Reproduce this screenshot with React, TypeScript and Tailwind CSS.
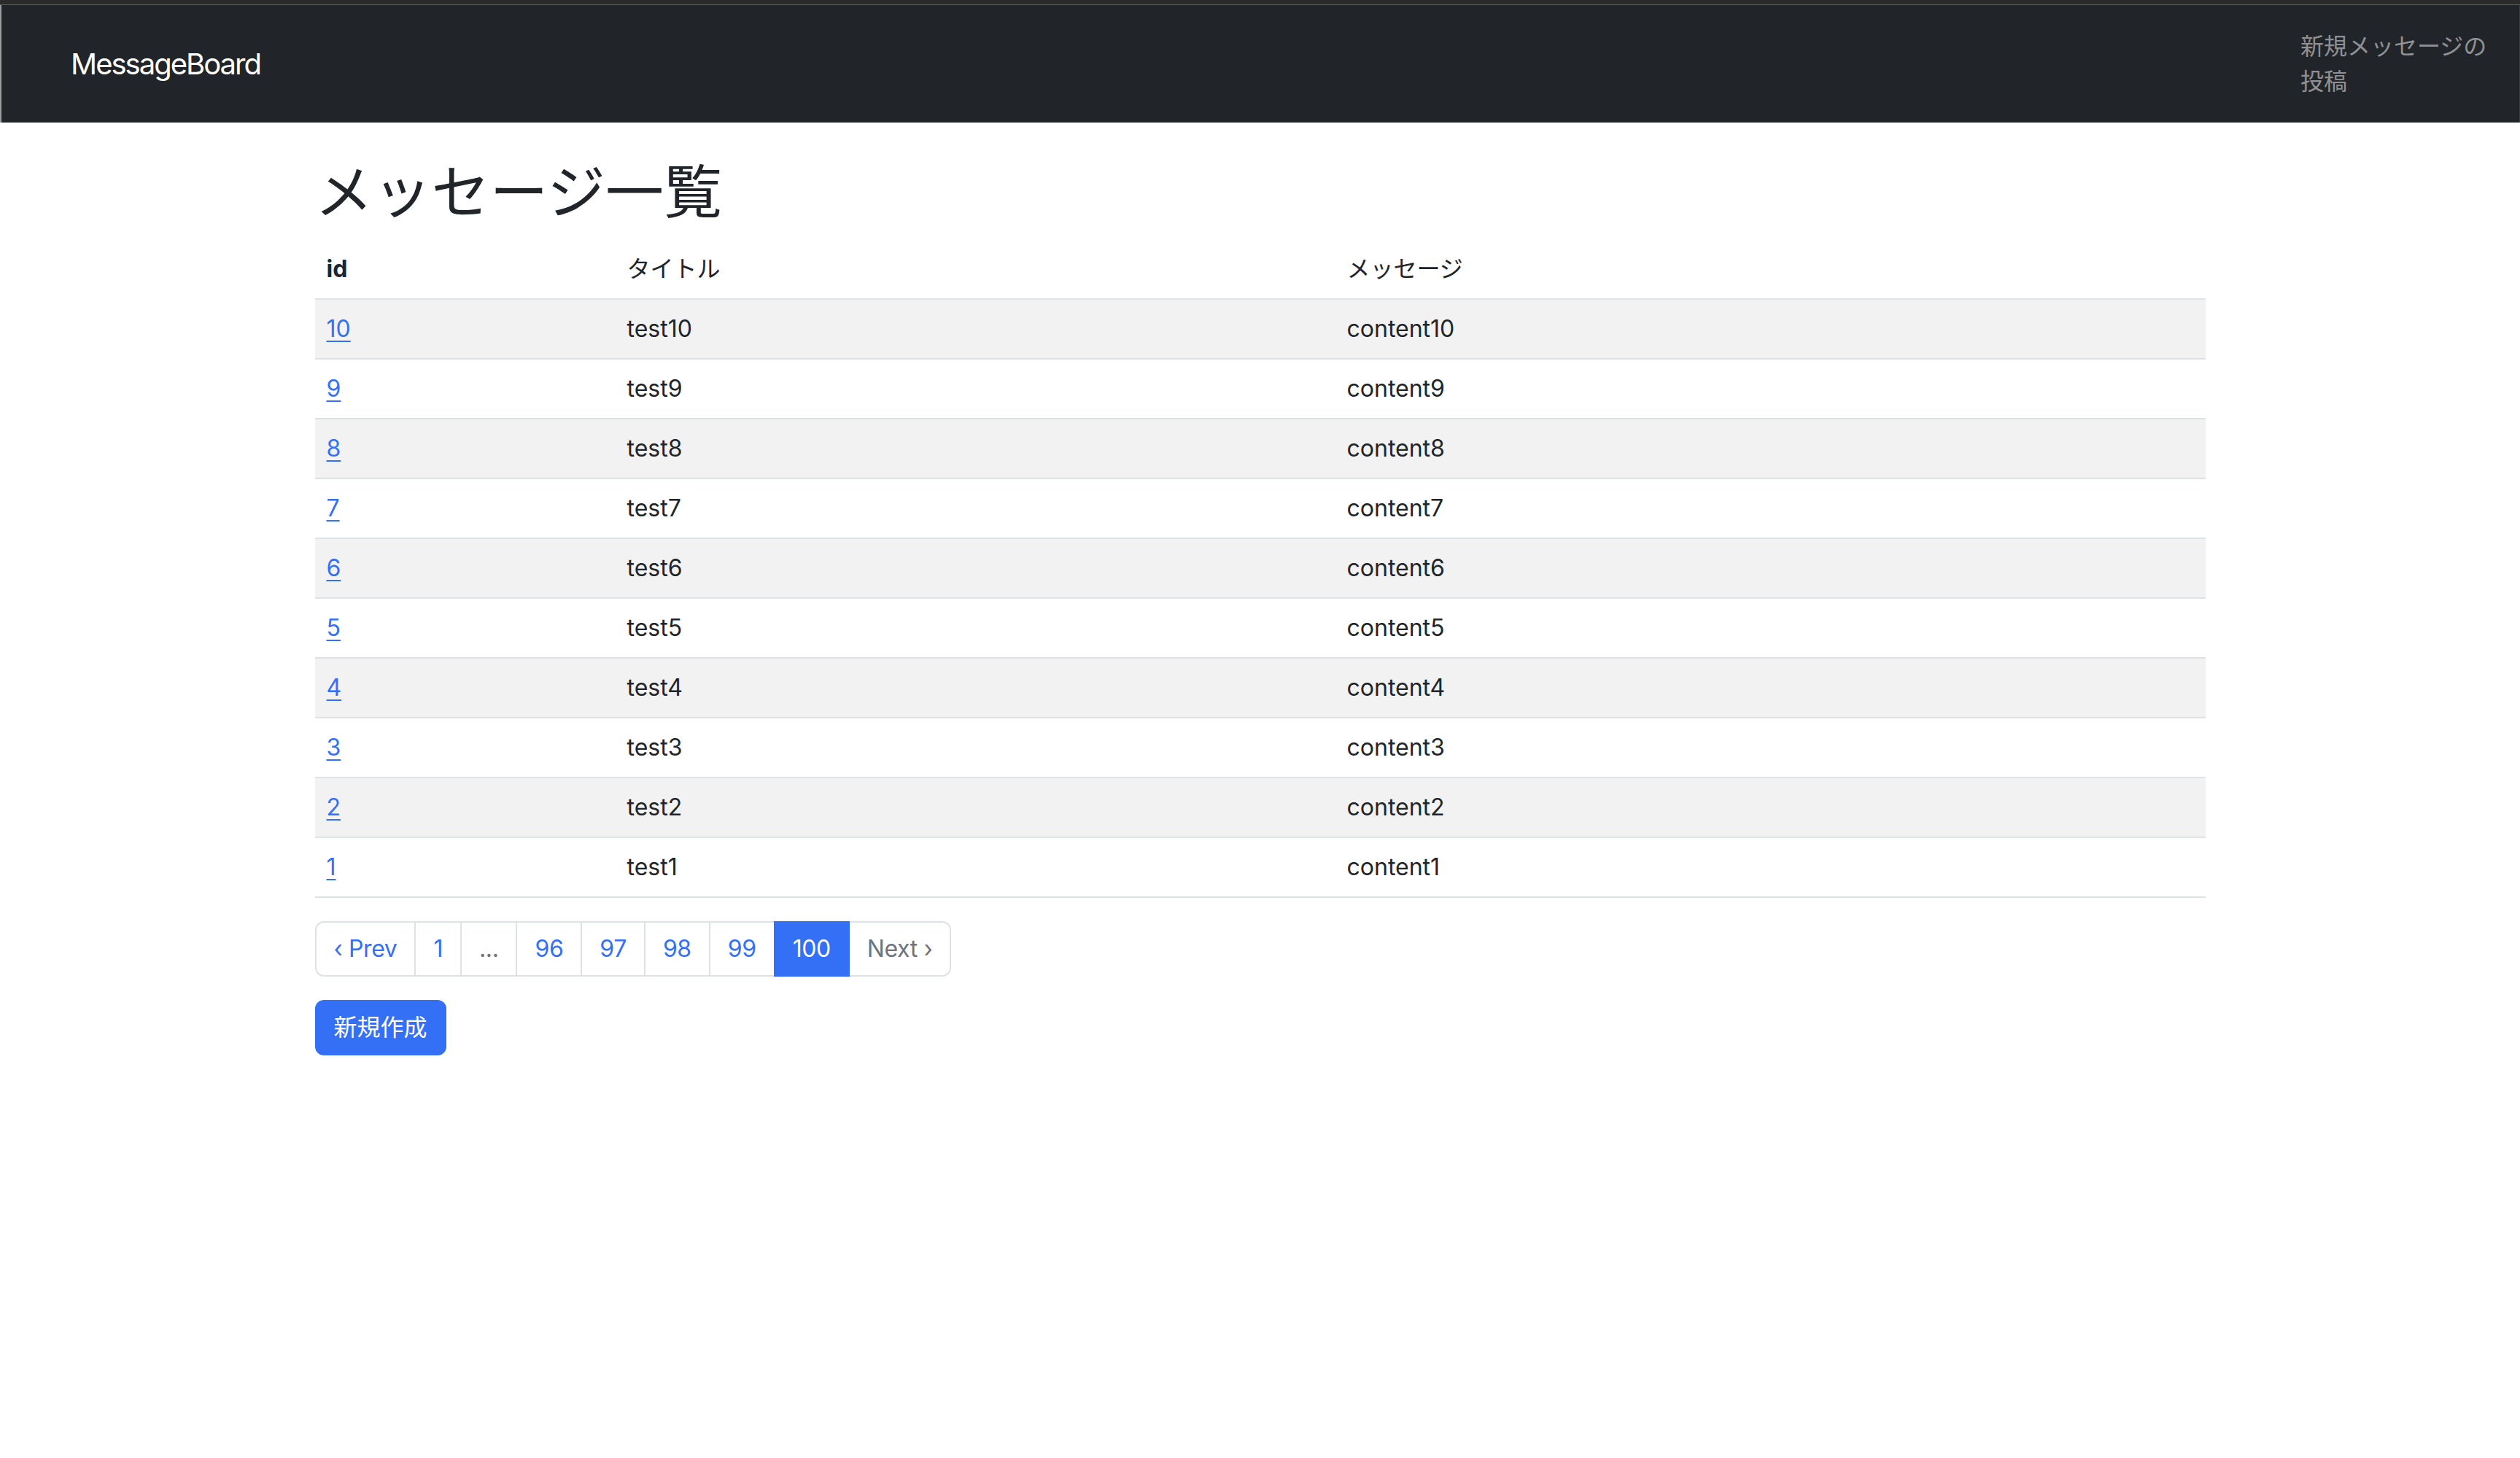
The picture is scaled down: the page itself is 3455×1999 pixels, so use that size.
import React from 'react';

const messages = [10, 9, 8, 7, 6, 5, 4, 3, 2, 1].map((id) => ({
  id,
  title: `test${id}`,
  content: `content${id}`,
}));

const pages = [
  { label: '‹ Prev', kind: 'link' },
  { label: '1', kind: 'link' },
  { label: '...', kind: 'disabled' },
  { label: '96', kind: 'link' },
  { label: '97', kind: 'link' },
  { label: '98', kind: 'link' },
  { label: '99', kind: 'link' },
  { label: '100', kind: 'active' },
  { label: 'Next ›', kind: 'disabled' },
];

function Navbar() {
  return (
    <nav className="flex h-[161px] items-center justify-between border-l-2 border-r border-l-[#9d9d9d] border-r-[#3a3d41] bg-[#212529]">
      <a href="#" className="pl-[95px] text-[40px] leading-[60px] tracking-[-2px] text-white">
        MessageBoard
      </a>
      <a href="#" className="mr-[40px] w-[260px] text-[32px] leading-[48px] text-[#8f9194]">
        新規メッセージの投稿
      </a>
    </nav>
  );
}

function Pagination() {
  return (
    <ul className="mt-[32px] flex tracking-[-0.4px]">
      {pages.map((p, i) => {
        const first = i === 0;
        const last = i === pages.length - 1;
        let cls = 'border-[#dee2e6] bg-white text-[#3470f5]';
        if (p.kind === 'disabled') cls = 'border-[#dee2e6] bg-white text-[#6c757d]';
        if (p.kind === 'active') cls = 'relative z-10 border-[#3470f5] bg-[#3470f5] text-white';
        return (
          <li key={p.label} className={first ? '' : '-ml-[2px]'}>
            <span
              className={`block border-2 px-6 py-3 text-[32px] leading-[48px] ${cls} ${
                first ? 'rounded-l-[12px]' : ''
              } ${last ? 'rounded-r-[12px]' : ''}`}
            >
              {p.label}
            </span>
          </li>
        );
      })}
    </ul>
  );
}

export default function App() {
  return (
    <div
      className="min-h-screen bg-white text-[#212529]"
      style={{ fontFamily: 'Inter, "Noto Sans CJK JP", sans-serif' }}
    >
      <div className="h-[6px] bg-[#2b2b2b]" />
      <div className="h-px bg-[#5c5c5c]" />
      <Navbar />

      <main className="mx-auto w-[2592px] pt-[47px]">
        <h1 className="mb-[18px] text-[80px] font-normal leading-[96px]">メッセージ一覧</h1>

        <table className="w-full border-collapse text-left text-[32px] leading-[48px]">
          <thead>
            <tr className="border-b-2 border-[#dee2e6]">
              <th className="w-[412px] px-4 py-4 font-bold">id</th>
              <th className="w-[987px] px-4 py-4 font-normal">タイトル</th>
              <th className="px-4 py-4 font-normal">メッセージ</th>
            </tr>
          </thead>
          <tbody>
            {messages.map((m, i) => (
              <tr
                key={m.id}
                className={`border-b-2 border-[#dee2e6] ${i % 2 === 0 ? 'bg-[#f2f2f2]' : 'bg-white'}`}
              >
                <td className="px-4 py-4">
                  <a href="#" className="text-[#3470f5] underline decoration-2 underline-offset-[5px]">
                    {m.id}
                  </a>
                </td>
                <td className="px-4 py-4">{m.title}</td>
                <td className="px-4 py-4">{m.content}</td>
              </tr>
            ))}
          </tbody>
        </table>

        <Pagination />

        <button className="mt-8 rounded-[12px] border-2 border-[#3470f5] bg-[#3470f5] px-6 py-3 text-[32px] leading-[48px] text-white">
          新規作成
        </button>
      </main>
    </div>
  );
}
